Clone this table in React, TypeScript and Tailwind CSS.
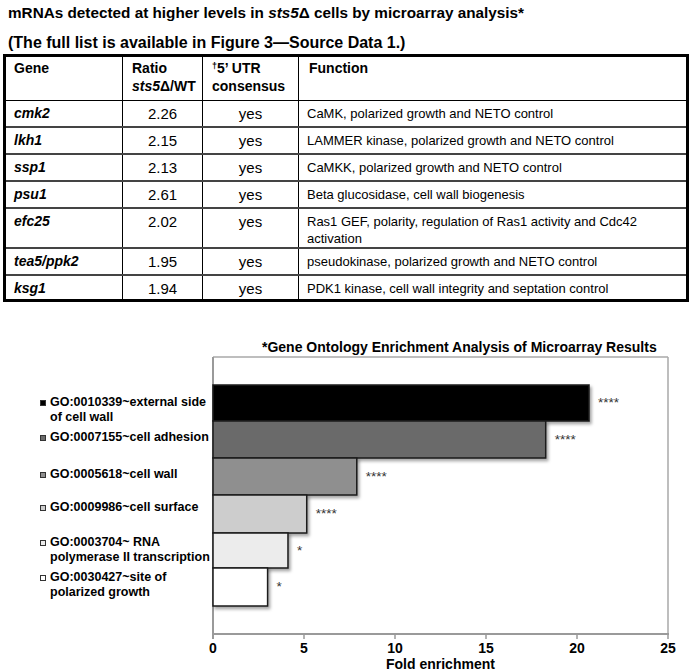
import React from "react";

const rows = [
  { g: "cmk2", r: "2.26", f: "CaMK, polarized growth and NETO control", h: "h-[27px]" },
  { g: "lkh1", r: "2.15", f: "LAMMER kinase, polarized growth and NETO control", h: "h-[27px]" },
  { g: "ssp1", r: "2.13", f: "CaMKK, polarized growth and NETO control", h: "h-[27px]" },
  { g: "psu1", r: "2.61", f: "Beta glucosidase, cell wall biogenesis", h: "h-[27px]" },
  { g: "efc25", r: "2.02", f: "Ras1 GEF, polarity, regulation of Ras1 activity and Cdc42 activation", h: "h-[40px]" },
  { g: "tea5/ppk2", r: "1.95", f: "pseudokinase, polarized growth and NETO control", h: "h-[27px]" },
  { g: "ksg1", r: "1.94", f: "PDK1 kinase, cell wall integrity and septation control", h: "h-[23px]" },
];

const bars = [
  { v: 20.66, y0: 385, y1: 421, fill: "#000000", s: "****" },
  { v: 18.28, y0: 421, y1: 458, fill: "#6b6b6b", s: "****" },
  { v: 7.9, y0: 458, y1: 495, fill: "#8f8f8f", s: "****" },
  { v: 5.15, y0: 495, y1: 533, fill: "#cdcdcd", s: "****" },
  { v: 4.12, y0: 533, y1: 568, fill: "#ececec", s: "*" },
  { v: 3.0, y0: 568, y1: 606, fill: "#ffffff", s: "*" },
];

const X = (v: number) => 13 + v * 18.2;
const OY = 356;

function Marker({ fill }: { fill: string }) {
  return (
    <span
      className="inline-block w-[6px] h-[6px] border border-[#333] mr-[4px] mt-[5px] shrink-0"
      style={{ backgroundColor: fill }}
    />
  );
}

function Label({ fill, lines, className }: { fill: string; lines: string[]; className: string }) {
  return (
    <div className={"flex items-start pl-[40px] " + className}>
      <Marker fill={fill} />
      <div className="leading-[15px] text-[12.5px] font-bold whitespace-nowrap">
        {lines.map((l, i) => (
          <div key={i}>{l}</div>
        ))}
      </div>
    </div>
  );
}

export default function App() {
  return (
    <div
      className="w-[690px] min-h-[672px] bg-white text-black"
      style={{ fontFamily: '"Liberation Sans", Arial, sans-serif' }}
    >
      {/* Title */}
      <div className="pl-[8px] pt-[2px] font-bold">
        <div className="text-[15.3px] leading-[22px] whitespace-nowrap">
          mRNAs detected at higher levels in <i>sts5</i>Δ cells by microarray analysis*
        </div>
        <div className="text-[16px] leading-[22px] mt-[8px] whitespace-nowrap">
          (The full list is available in Figure 3—Source Data 1.)
        </div>
      </div>

      {/* Table */}
      <div className="ml-[3px] w-[686px] border-[3px] border-black">
        <div className="grid grid-cols-[117px_80px_96px_1fr] h-[44px] border-b border-black font-bold text-[14px] leading-[18px]">
          <div className="border-r border-black pl-[8px] pt-[2px]">Gene</div>
          <div className="border-r border-black pl-[9px] pt-[2px]">
            <div>Ratio</div>
            <div>
              <i>sts5</i>Δ/WT
            </div>
          </div>
          <div className="border-r border-black pl-[9px] pt-[2px]">
            <div>
              <sup className="text-[9px]">†</sup>5’ UTR
            </div>
            <div>consensus</div>
          </div>
          <div className="pl-[10px] pt-[2px]">Function</div>
        </div>
        {rows.map((r, i) => (
          <div
            key={r.g}
            className={
              "grid grid-cols-[117px_80px_96px_1fr] " +
              r.h +
              (i < rows.length - 1 ? " border-b-2 border-[#444]" : "")
            }
          >
            <div className="border-r border-black pl-[8px] pt-[4px] leading-[17px] text-[14px] font-bold italic">
              {r.g}
            </div>
            <div className="border-r border-black pt-[4px] leading-[17px] text-[15px] text-center">{r.r}</div>
            <div className="border-r border-black pt-[4px] leading-[17px] text-[15px] text-center">yes</div>
            <div className="pl-[8px] pr-[40px] pt-[4px] leading-[17px] text-[13px]">{r.f}</div>
          </div>
        ))}
      </div>

      {/* Chart */}
      <div className="mt-[37px]">
        <div className="pl-[262px] text-[14px] leading-[17px] font-bold whitespace-nowrap">
          *Gene Ontology Enrichment Analysis of Microarray Results
        </div>
        <div className="flex">
          <div className="w-[200px] shrink-0 pt-[39px]">
            <Label fill="#000000" lines={["GO:0010339~external side", "of cell wall"]} className="" />
            <Label fill="#6b6b6b" lines={["GO:0007155~cell adhesion"]} className="mt-[5px]" />
            <Label fill="#8f8f8f" lines={["GO:0005618~cell wall"]} className="mt-[22px]" />
            <Label fill="#cdcdcd" lines={["GO:0009986~cell surface"]} className="mt-[18px]" />
            <Label fill="#ececec" lines={["GO:0003704~ RNA", "polymerase II transcription"]} className="mt-[20px]" />
            <Label fill="#ffffff" lines={["GO:0030427~site of", "polarized growth"]} className="mt-[5px]" />
          </div>
          <svg width="490" height="300" viewBox="0 0 490 300" className="overflow-visible shrink-0">
            <defs>
              <filter id="sh" x="-10%" y="-20%" width="130%" height="160%">
                <feDropShadow dx="2" dy="2.5" stdDeviation="1.8" floodColor="#000" floodOpacity="0.35" />
              </filter>
            </defs>
            <line x1="13" y1="1" x2="468" y2="1" stroke="#a8a8a8" strokeWidth="1.5" />
            <line x1="468" y1="1" x2="468" y2="278" stroke="#a8a8a8" strokeWidth="1.5" />
            <line x1="13" y1="1" x2="13" y2="283" stroke="#9a9a9a" strokeWidth="2" />
            <line x1="12" y1="278" x2="469" y2="278" stroke="#9a9a9a" strokeWidth="2" />
            {[0, 5, 10, 15, 20, 25].map((t) => (
              <g key={t}>
                <line x1={X(t)} y1="278" x2={X(t)} y2="283" stroke="#9a9a9a" strokeWidth="1.5" />
                <text
                  x={X(t)}
                  y="297"
                  textAnchor="middle"
                  fontSize="14"
                  fontWeight="bold"
                  fontFamily='"Liberation Sans", Arial, sans-serif'
                >
                  {t}
                </text>
              </g>
            ))}
            {bars.map((b, i) => (
              <g key={i}>
                <rect
                  x="13"
                  y={b.y0 - OY}
                  width={X(b.v) - 13}
                  height={b.y1 - b.y0}
                  fill={b.fill}
                  stroke="#1a1a1a"
                  strokeWidth="1.5"
                  filter="url(#sh)"
                />
                <text
                  x={X(b.v) + 9}
                  y={(b.y0 + b.y1) / 2 - OY + 4}
                  fontSize="13.5"
                  fill="#333"
                  fontFamily='"Liberation Sans", Arial, sans-serif'
                >
                  {b.s}
                </text>
              </g>
            ))}
          </svg>
        </div>
        <div className="pl-[386px] mt-[1px] text-[14px] leading-[15px] font-bold whitespace-nowrap">Fold enrichment</div>
      </div>
    </div>
  );
}
